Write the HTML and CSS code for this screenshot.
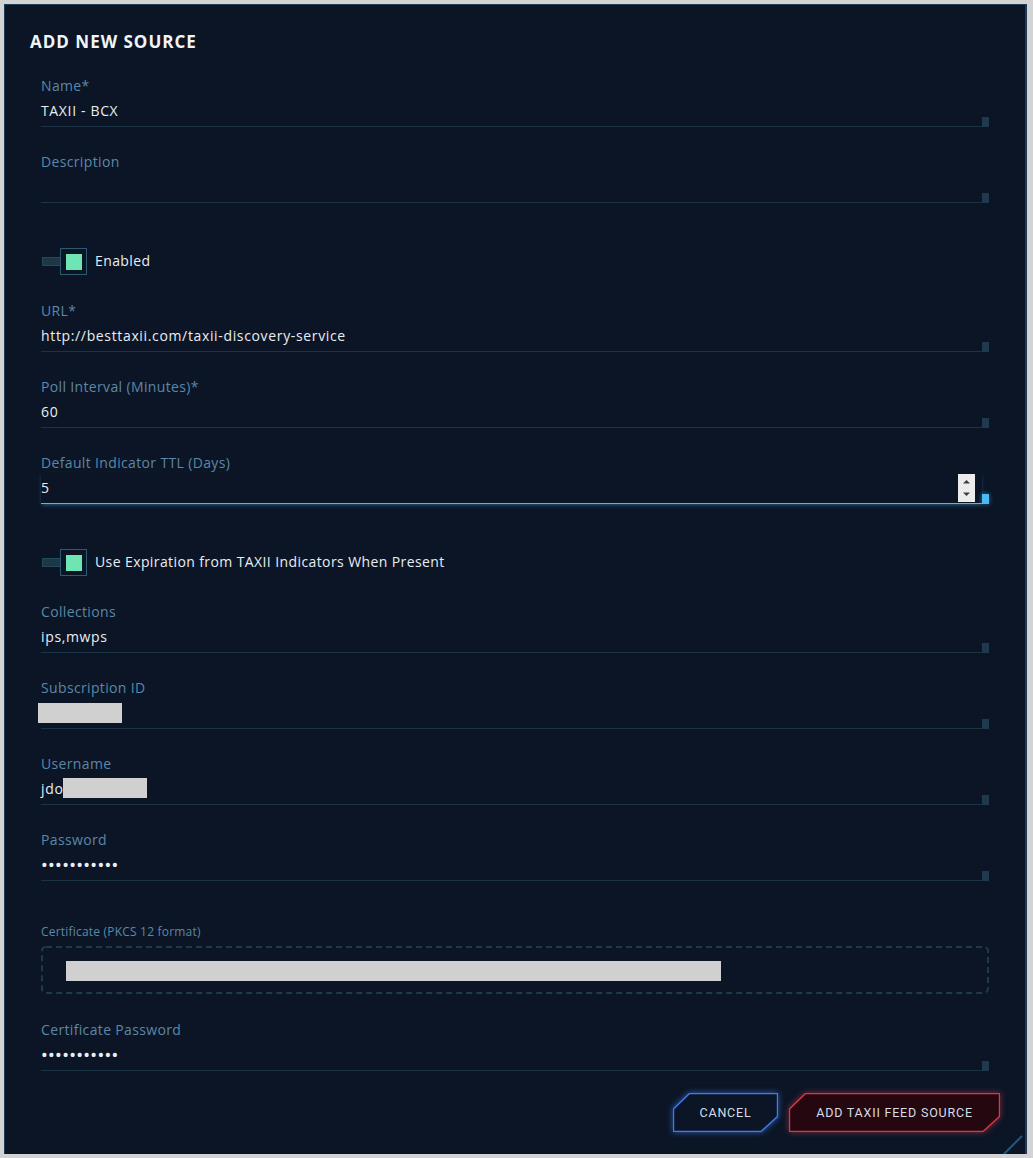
FILE: index.html
```html
<!DOCTYPE html>
<html>
<head>
<meta charset="utf-8">
<link rel="stylesheet" href="styles.css">
</head>
<body>
<div class="panel">
  <h1 class="title">ADD NEW SOURCE</h1>
  <div class="form">
    <div class="field">
      <div class="label">Name*</div>
      <div class="inputrow"><div class="input">TAXII - BCX</div><div class="nub"></div></div>
    </div>
    <div class="field">
      <div class="label">Description</div>
      <div class="inputrow"><div class="input"></div><div class="nub"></div></div>
    </div>
    <div class="toggle">
      <div class="track"></div>
      <div class="knob"><div class="dot"></div></div>
      <div class="tlabel">Enabled</div>
    </div>
    <div class="field">
      <div class="label">URL*</div>
      <div class="inputrow"><div class="input">http://besttaxii.com/taxii-discovery-service</div><div class="nub"></div></div>
    </div>
    <div class="field">
      <div class="label">Poll Interval (Minutes)*</div>
      <div class="inputrow"><div class="input">60</div><div class="nub"></div></div>
    </div>
    <div class="field focused">
      <div class="label">Default Indicator TTL (Days)</div>
      <div class="inputrow">
        <div class="input"><span class="grow">5</span>
          <div class="spinner">
            <svg width="17" height="28" viewBox="0 0 17 28"><path d="M5 9.5 L8.5 6 L12 9.5 Z" fill="#3e3e3e"/><path d="M5 18.5 L8.5 22 L12 18.5 Z" fill="#3e3e3e"/></svg>
          </div>
        </div>
        <div class="nub"></div>
      </div>
    </div>
    <div class="toggle">
      <div class="track"></div>
      <div class="knob"><div class="dot"></div></div>
      <div class="tlabel">Use Expiration from TAXII Indicators When Present</div>
    </div>
    <div class="field">
      <div class="label">Collections</div>
      <div class="inputrow"><div class="input">ips,mwps</div><div class="nub"></div></div>
    </div>
    <div class="field">
      <div class="label">Subscription ID</div>
      <div class="inputrow"><div class="input"><span class="redact redact-left"></span></div><div class="nub"></div></div>
    </div>
    <div class="field">
      <div class="label">Username</div>
      <div class="inputrow"><div class="input">jdo<span class="redact redact-up"></span></div><div class="nub"></div></div>
    </div>
    <div class="field">
      <div class="label">Password</div>
      <div class="inputrow"><div class="input"><span class="dots">•••••••••••</span></div><div class="nub"></div></div>
    </div>
    <div class="field cert">
      <div class="label small">Certificate (PKCS 12 format)</div>
      <div class="dropzone">
        <svg class="dash" width="948" height="48" viewBox="0 0 948 48"><rect x="1" y="1" width="946" height="46" rx="4" ry="4" fill="none" stroke="#1f3a4c" stroke-width="2" stroke-dasharray="6 4"/></svg>
        <div class="bar"></div>
      </div>
    </div>
    <div class="field last">
      <div class="label">Certificate Password</div>
      <div class="inputrow"><div class="input"><span class="dots">•••••••••••</span></div><div class="nub"></div></div>
    </div>
  </div>
  <div class="actions">
    <button class="btn btn-cancel">
      <svg class="shape" width="105" height="39" viewBox="0 0 105 39"><polygon points="0.5,16 16.5,0.5 104.5,0.5 104.5,23.5 88,38.5 0.5,38.5" fill="#0b1526" stroke="#3d7cf2" stroke-width="1.4"/></svg>
      <span class="btxt">CANCEL</span>
    </button>
    <button class="btn btn-add">
      <svg class="shape" width="211" height="39" viewBox="0 0 211 39"><polygon points="0.5,16 16.5,0.5 210.5,0.5 210.5,23.5 194,38.5 0.5,38.5" fill="#25070f" stroke="#d9384a" stroke-width="1.4"/></svg>
      <span class="btxt">ADD TAXII FEED SOURCE</span>
    </button>
  </div>
  <svg class="corner" width="24" height="22" viewBox="0 0 24 22"><path d="M3 22 L21 4" stroke="#24557a" stroke-width="2"/></svg>
</div>
</body>
</html>
```
FILE: styles.css
```css
html, body {
  margin: 0;
  padding: 0;
  background: #d3d3d3;
}
body {
  padding: 4px 0;
  font-family: "Open Sans", Roboto, "Liberation Sans", sans-serif;
}
.panel {
  position: relative;
  margin: 0 4px 0 4px;
  width: 1023px;
  height: 1150px;
  box-sizing: border-box;
  background: #0b1526;
  border-top: 1px solid #1d3e55;
  border-left: 1px solid #1d3e55;
  border-right: 2px solid #1c3b5c;
  padding: 25px 25px 21px 25px;
}
.title {
  margin: 0;
  font-size: 17px;
  line-height: 24px;
  font-weight: 700;
  color: #f2f5f8;
  letter-spacing: 1px;
}
.form {
  margin: 23px 11px 0 11px;
}
.field {
  margin-bottom: 26px;
}
.field.last {
  margin-bottom: 0;
}
.label {
  font-size: 14px;
  line-height: 18px;
  color: #5b88a6;
  letter-spacing: 0.35px;
}
.label.small {
  font-size: 12px;
  line-height: 16px;
  letter-spacing: 0.2px;
}
.inputrow {
  display: flex;
  align-items: flex-end;
}
.input {
  flex: 1;
  height: 31px;
  display: flex;
  align-items: center;
  border-bottom: 1px solid #1b3445;
  font-size: 14px;
  letter-spacing: 0.65px;
  color: #e8eef3;
}
.nub {
  width: 7px;
  height: 10px;
  background: #1f3a4e;
}
.focused .input {
  border-bottom: 1px solid #4cb9f4;
  box-shadow: 0 2px 4px -1px rgba(76, 185, 244, 0.45);
}
.focused .nub {
  background: #4cb9f4;
  box-shadow: 0 0 5px rgba(76, 185, 244, 0.6);
}
.grow {
  flex: 1;
}
.spinner {
  width: 17px;
  height: 28px;
  background: #ececec;
  margin-right: 7px;
  align-self: flex-end;
  margin-bottom: 1px;
}
.spinner svg {
  display: block;
}
.dots {
  font-family: Roboto, sans-serif;
  font-size: 20px;
  line-height: 20px;
  letter-spacing: 0.3px;
}
.redact {
  display: inline-block;
  width: 84px;
  height: 20px;
  background: #d0d0d0;
}
.redact-left {
  margin-left: -3px;
}
.redact-up {
  position: relative;
  top: -1px;
}
.toggle {
  display: flex;
  align-items: center;
  height: 27px;
  margin: 45px 0 27px 0;
}
.track {
  width: 18px;
  height: 9px;
  margin-left: 1px;
  background: #1c3846;
  border: 1px solid #24495a;
  border-right: none;
  box-sizing: border-box;
}
.knob {
  width: 27px;
  height: 27px;
  box-sizing: border-box;
  border: 1px solid #2b5a71;
  display: flex;
  align-items: center;
  justify-content: center;
}
.dot {
  width: 16px;
  height: 16px;
  background: #6fe5b3;
}
.tlabel {
  margin-left: 8px;
  margin-bottom: 2px;
  font-size: 14px;
  letter-spacing: 0.4px;
  color: #e8eef3;
}
.cert {
  margin-top: 43px;
  margin-bottom: 27px;
}
.dropzone {
  position: relative;
  margin-top: 6px;
  height: 48px;
  box-sizing: border-box;
  padding: 15px 0 0 25px;
}
.dash {
  position: absolute;
  left: 0;
  top: 0;
}
.bar {
  position: relative;
  width: 655px;
  height: 20px;
  background: #d0d0d0;
}
.actions {
  display: flex;
  justify-content: flex-end;
  gap: 11px;
  margin-top: 22px;
}
.btn {
  position: relative;
  height: 39px;
  padding: 0;
  border: none;
  background: none;
  font-family: Roboto, "Liberation Sans", sans-serif;
  font-size: 12.5px;
  letter-spacing: 0.8px;
  color: #d4dee8;
  cursor: pointer;
}
.btn-cancel {
  width: 105px;
}
.btn-add {
  width: 211px;
}
.shape {
  position: absolute;
  left: 0;
  top: 0;
}
.btn-cancel .shape {
  filter: drop-shadow(0 0 3px rgba(61, 124, 242, 0.7));
}
.btn-add .shape {
  filter: drop-shadow(0 0 3px rgba(217, 56, 74, 0.6));
}
.btxt {
  position: relative;
}
.corner {
  position: absolute;
  right: 0;
  bottom: 0;
}
```
